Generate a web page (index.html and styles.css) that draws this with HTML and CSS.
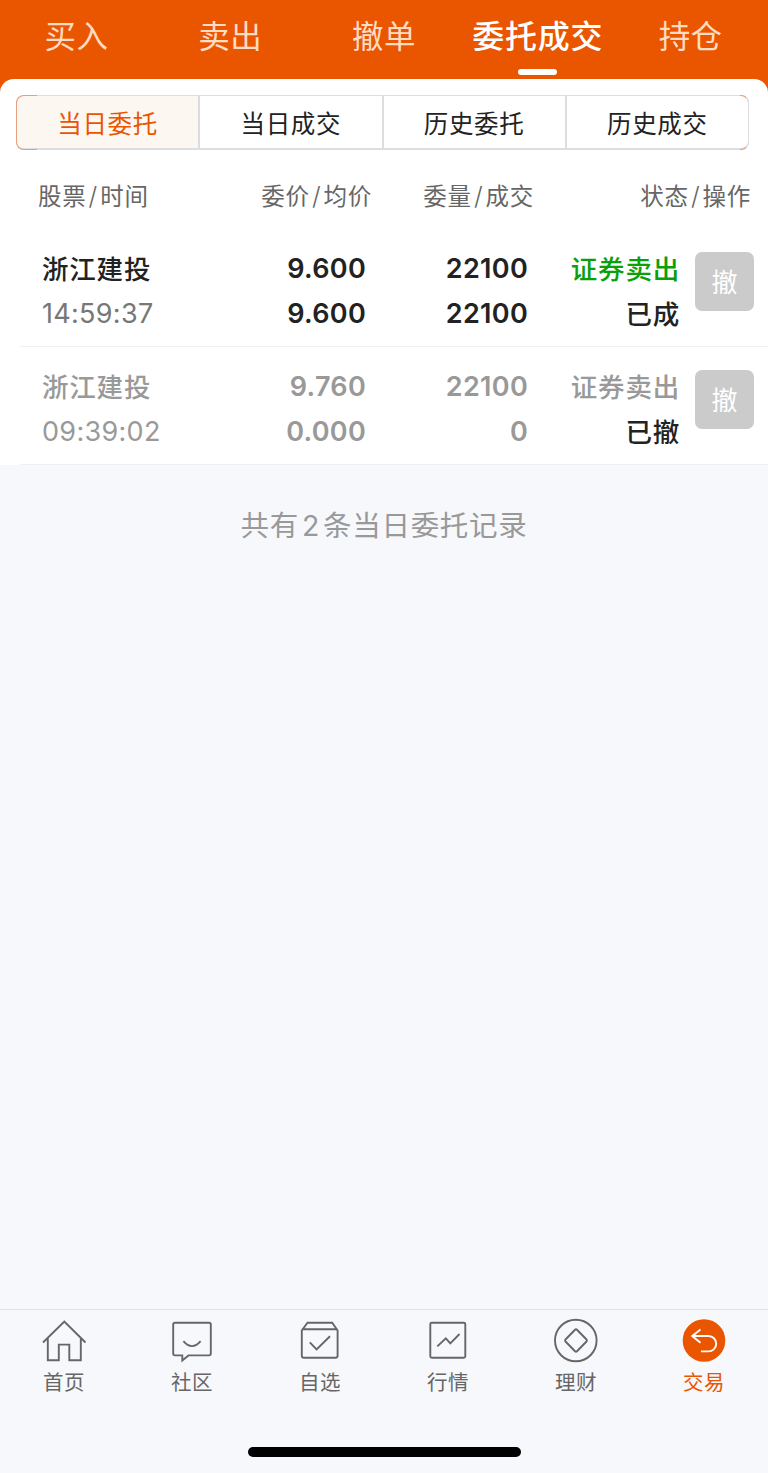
FILE: index.html
```html
<!DOCTYPE html>
<html lang="zh-CN">
<head>
    <meta charset="UTF-8">
    <meta name="viewport" content="width=device-width, initial-scale=1.0">
    <title>委托成交</title>
    <link rel="stylesheet" href="styles.css">
</head>
<body>
    <div class="page">
        <nav class="top-tabs">
            <a class="tab">买入</a>
            <a class="tab">卖出</a>
            <a class="tab">撤单</a>
            <a class="tab active">委托成交</a>
            <a class="tab">持仓</a>
        </nav>

        <div class="panel-wrap">
            <div class="panel">
                <div class="segments">
                    <div class="segment active">当日委托</div>
                    <div class="segment">当日成交</div>
                    <div class="segment">历史委托</div>
                    <div class="segment">历史成交</div>
                </div>

                <div class="list-head">
                    <span>股票<i>/</i>时间</span>
                    <span>委价<i>/</i>均价</span>
                    <span>委量<i>/</i>成交</span>
                    <span>状态<i>/</i>操作</span>
                </div>

                <div class="order">
                    <div class="cell stock"><b>浙江建投</b><span class="num time">14:59:37</span></div>
                    <div class="cell num"><b>9.600</b><b>9.600</b></div>
                    <div class="cell num"><b>22100</b><b>22100</b></div>
                    <div class="cell"><b class="sell">证券卖出</b><b>已成</b></div>
                    <button class="cancel">撤</button>
                </div>

                <div class="order done">
                    <div class="cell stock"><b>浙江建投</b><span class="num time">09:39:02</span></div>
                    <div class="cell num"><b>9.760</b><b>0.000</b></div>
                    <div class="cell num"><b>22100</b><b>0</b></div>
                    <div class="cell"><b>证券卖出</b><b class="state">已撤</b></div>
                    <button class="cancel">撤</button>
                </div>
            </div>
        </div>

        <p class="summary">共有<span>2</span>条当日委托记录</p>

        <footer class="bottom-bar">
            <div class="menu">
                <a class="menu-item">
                    <svg viewBox="0 0 48 48">
                        <path d="M3 24.5 24.3 3.5 45.5 24.5M7.8 20.5V42.3H18.8V26.600H29.3V42.3H40.8V20.5"/>
                    </svg>
                    首页
                </a>
                <a class="menu-item">
                    <svg viewBox="0 0 48 48">
                        <path d="M7 4.700H41Q42.800 4.700 42.800 6.500V35.600Q42.800 37.400 41 37.400H20.500L14.300 42.400V37.400H7Q5.200 37.400 5.200 35.600V6.500Q5.200 4.700 7 4.700Z"/>
                        <path d="M15.400 23.200Q24 33 32.600 23.200"/>
                    </svg>
                    社区
                </a>
                <a class="menu-item">
                    <svg viewBox="0 0 48 48">
                        <path d="M5.800 12.500 11.500 4.700H36.200L41.600 12.500V37.800Q41.600 39.800 39.600 39.800H7.800Q5.800 39.800 5.800 37.800ZM5.800 11.300H41.600"/>
                        <path d="M13.800 24.300 20.600 31.400 34 18.200"/>
                    </svg>
                    自选
                </a>
                <a class="menu-item">
                    <svg viewBox="0 0 48 48">
                        <rect x="6.300" y="4.700" width="35" height="35" rx="1.500"/>
                        <path d="M13.300 28.400 21.800 20.300 26.300 25.300 35.500 16"/>
                    </svg>
                    行情
                </a>
                <a class="menu-item">
                    <svg viewBox="0 0 48 48">
                        <circle cx="23.800" cy="22.500" r="20.800"/>
                        <path d="M23 11.800Q24 10.900 25 11.800L34.500 21.500Q35.400 22.500 34.500 23.500L25 33.200Q24 34.100 23 33.200L13.500 23.500Q12.600 22.500 13.500 21.500Z"/>
                    </svg>
                    理财
                </a>
                <a class="menu-item active">
                    <svg viewBox="0 0 48 48">
                        <circle class="dot" cx="24" cy="22.500" r="21.300"/>
                        <path d="M20.500 11.500 12.200 18 20.500 24.700M12.200 18H28.500A7.700 7.700 0 0 1 28.500 33.400H21"/>
                    </svg>
                    交易
                </a>
            </div>
            <div class="home-bar"></div>
        </footer>
    </div>
</body>
</html>
```

FILE: styles.css
```css
* {
    box-sizing: border-box;
}
body {
    margin: 0;
    background: #f7f8fb;
    color: #222;
    font-family: "Noto Sans CJK SC", sans-serif;
}
.page {
    display: flex;
    flex-direction: column;
    height: 1473px;
    overflow: hidden;
}

/* top tabs */
.top-tabs {
    display: flex;
    height: 79px;
    background: #ea5500;
}
.tab {
    flex: 1;
    display: flex;
    flex-direction: column;
    align-items: center;
    color: #ffdcc2;
    font-size: 31.5px;
    line-height: 46px;
    letter-spacing: 0.4px;
    padding: 11px 1px 0 0;
    white-space: nowrap;
}
.tab.active {
    color: #fff;
    font-size: 32px;
    font-weight: 500;
    letter-spacing: 0.8px;
    padding-right: 0;
}
.tab.active::after {
    content: "";
    width: 39px;
    height: 6px;
    margin-top: 12px;
    border-radius: 3px;
    background: #fff;
}

/* white panel */
.panel-wrap {
    background: linear-gradient(#ea5500 20px, #fff 20px);
}
.panel {
    height: 386px;
    padding-top: 16px;
    border-radius: 14px 14px 0 0;
    background: #fff;
}
.segments {
    display: flex;
    height: 55px;
    margin: 0 19px 0 16px;
    border: 1px solid #dcdde1;
    border-bottom-width: 2px;
    border-radius: 8px;
    position: relative;
}
/* orange rounded ends of the frame */
.segments::before,
.segments::after {
    content: "";
    position: absolute;
    top: -1px;
    bottom: -2px;
    width: 20px;
    border: 1px solid #e5a080;
}
.segments::before {
    left: -1px;
    border-right: 0;
    border-radius: 8px 0 0 8px;
}
.segments::after {
    right: -1px;
    width: 8px;
    border-left: 0;
    border-right-color: #dcdde1;
    border-radius: 0 8px 8px 0;
}
.segment {
    flex: 1;
    font-size: 24.5px;
    line-height: 53px;
    letter-spacing: 0.7px;
    text-align: center;
    border-left: 2px solid #dcdde1;
}
.segment.active {
    color: #ea5500;
    background: #fdf7f2;
    border-left: 0;
    border-radius: 7px 0 0 7px;
    height: 52px;
}

.list-head {
    display: grid;
    grid-template-columns: 110px 224px 162px 217px;
    padding-left: 38px;
    height: 79px;
    line-height: 91px;
    font-size: 23.5px;
    letter-spacing: 0.8px;
    color: #666;
    text-align: right;
    white-space: nowrap;
}
.list-head span:first-child {
    text-align: left;
}
.list-head i {
    font: 300 25px Inter, sans-serif;
    margin: 0 2px;
}

/* orders */
.order {
    display: grid;
    grid-template-columns: 145px 178px 162px 152px 59px;
    height: 118px;
    margin-left: 20px;
    padding: 17px 0 0 22px;
    border-bottom: 1px solid #eff0f2;
}
.cell {
    display: flex;
    flex-direction: column;
    align-items: flex-end;
    margin-right: -1px;
    font-size: 26.5px;
    line-height: 45px;
    letter-spacing: 0.8px;
    white-space: nowrap;
}
.cell b {
    position: relative;
    top: -1px;
    font-weight: 500;
}
.cell.stock {
    align-items: flex-start;
}
.num {
    font-family: Inter, sans-serif;
    font-size: 27px;
    letter-spacing: 0.3px;
}
.num b {
    top: 0;
    font-weight: 600;
}
.time {
    color: #777;
}
.sell {
    color: #09a009;
}
.done .cell {
    color: #999;
}
.done .time {
    color: #999;
}
.done .state {
    color: #222;
}
.cancel {
    width: 59px;
    height: 59px;
    margin: 6px 0 0 16px;
    padding: 0 0 2px;
    border: 0;
    border-radius: 7px;
    background: #cbcbcb;
    color: #fff;
    font: 26px "Noto Sans CJK SC", sans-serif;
}

.summary {
    margin: 38px 0 0;
    font-size: 28.5px;
    line-height: 42px;
    letter-spacing: 0.7px;
    color: #999;
    text-align: center;
}
.summary span {
    font-family: Inter, sans-serif;
    margin: 0 3px;
}

/* bottom bar */
.bottom-bar {
    height: 164px;
    margin-top: auto;
    border-top: 1px solid #dfe1e5;
}
.menu {
    display: flex;
    padding-top: 8px;
}
.menu-item {
    flex: 1;
    display: flex;
    flex-direction: column;
    align-items: center;
    font-size: 20.5px;
    line-height: 31px;
    letter-spacing: 0.6px;
    color: #666;
}
.menu-item svg {
    width: 48px;
    height: 48px;
    fill: none;
    stroke: #666;
    stroke-width: 1.9;
}
.menu-item.active {
    color: #ea5500;
}
.menu-item.active svg {
    stroke: #fff;
}
.menu-item .dot {
    fill: #ea5500;
    stroke: none;
}
.home-bar {
    width: 273px;
    height: 10px;
    margin: 50px auto 0;
    border-radius: 5px;
    background: #000;
}
```
